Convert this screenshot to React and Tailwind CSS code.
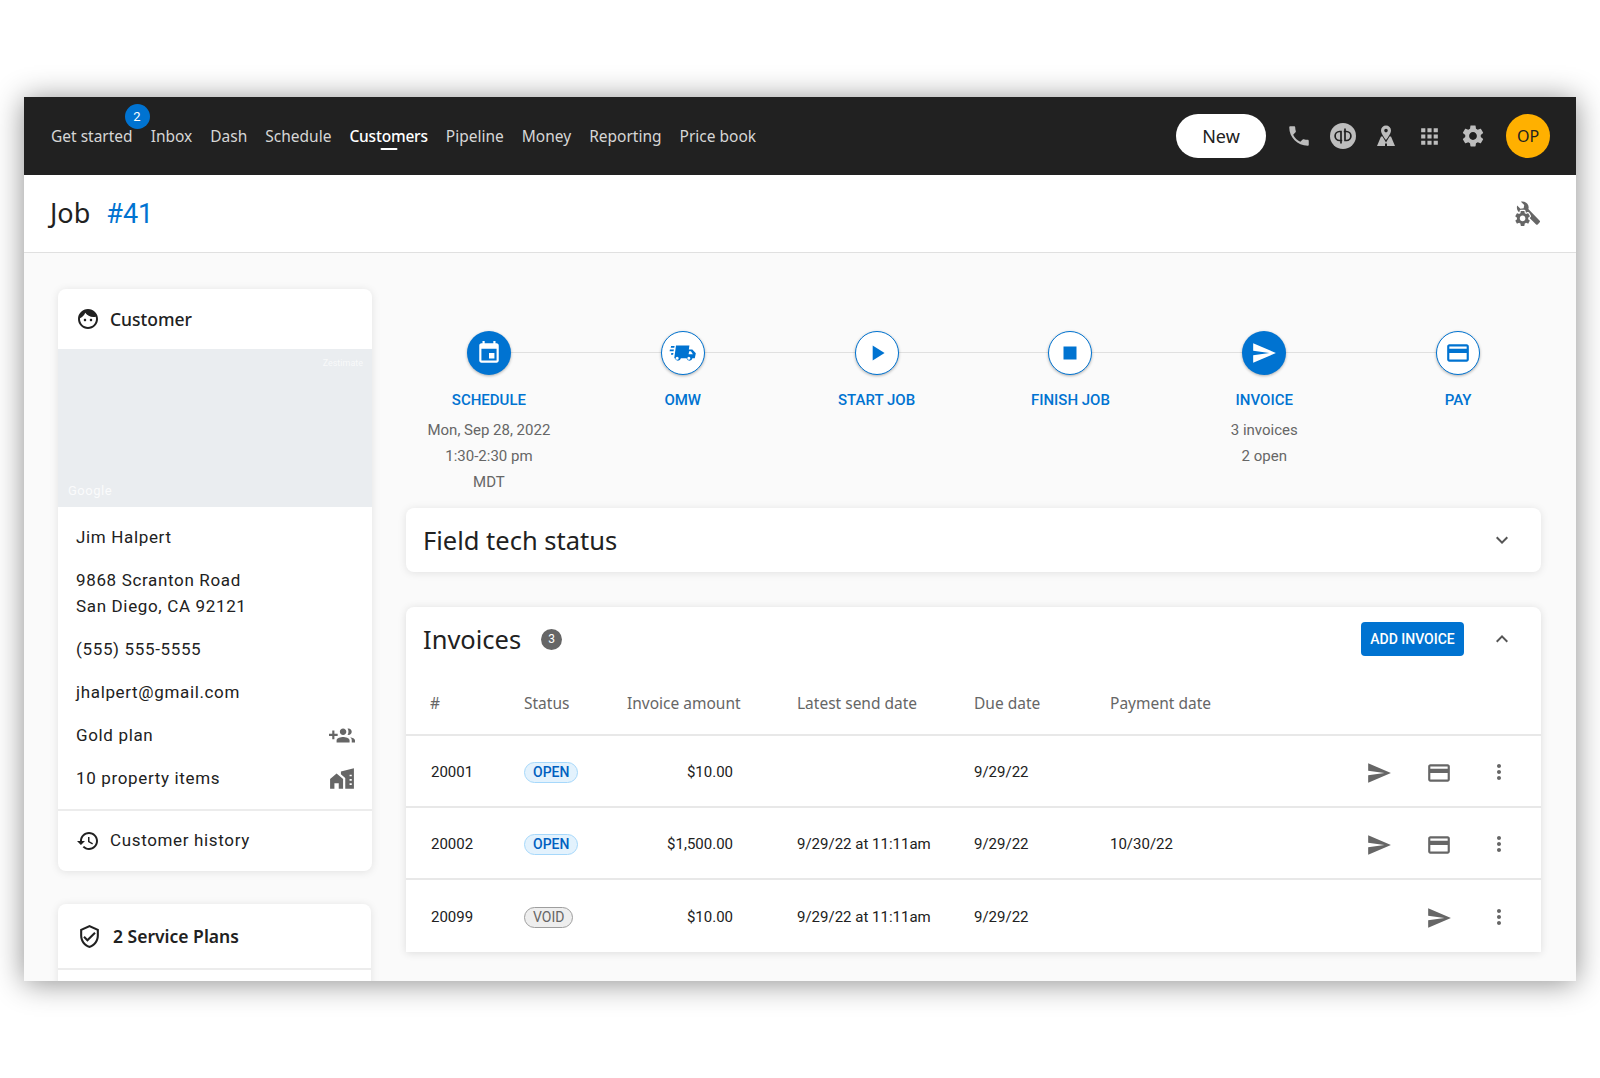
import React from 'react'

const noto = "font-['Noto_Sans',sans-serif]"

const paths = {
  phone: 'M6.62 10.79c1.44 2.83 3.76 5.14 6.59 6.59l2.2-2.2c.27-.27.67-.36 1.02-.24 1.12.37 2.33.57 3.57.57.55 0 1 .45 1 1V20c0 .55-.45 1-1 1-9.39 0-17-7.61-17-17 0-.55.45-1 1-1h3.5c.55 0 1 .45 1 1 0 1.25.2 2.45.57 3.57.11.35.03.74-.25 1.02l-2.2 2.2z',
  apps: 'M4 8h4V4H4v4zm6 12h4v-4h-4v4zm-6 0h4v-4H4v4zm0-6h4v-4H4v4zm6 0h4v-4h-4v4zm6-10v4h4V4h-4zm-6 4h4V4h-4v4zm6 6h4v-4h-4v4zm0 6h4v-4h-4v4z',
  gear: 'M19.14 12.94c.04-.3.06-.61.06-.94 0-.32-.02-.64-.07-.94l2.03-1.58c.18-.14.23-.41.12-.61l-1.92-3.32c-.12-.22-.37-.29-.59-.22l-2.39.96c-.5-.38-1.03-.7-1.62-.94l-.36-2.54c-.04-.24-.24-.41-.48-.41h-3.84c-.24 0-.43.17-.47.41l-.36 2.54c-.59.24-1.13.57-1.62.94l-2.39-.96c-.22-.08-.47 0-.59.22L2.74 8.87c-.12.21-.08.47.12.61l2.03 1.58c-.05.3-.09.63-.09.94s.02.64.07.94l-2.03 1.58c-.18.14-.23.41-.12.61l1.92 3.32c.12.22.37.29.59.22l2.39-.96c.5.38 1.03.7 1.62.94l.36 2.54c.05.24.24.41.48.41h3.84c.24 0 .44-.17.47-.41l.36-2.54c.59-.24 1.13-.56 1.62-.94l2.39.96c.22.08.47 0 .59-.22l1.92-3.32c.12-.22.07-.47-.12-.61l-2.01-1.58zM12 15.6c-1.98 0-3.6-1.62-3.6-3.6s1.62-3.6 3.6-3.6 3.6 1.62 3.6 3.6-1.62 3.6-3.6 3.6z',
  send: 'M2.01 21L23 12 2.01 3 2 10l15 2-15 2z',
  card: 'M20 4H4c-1.11 0-1.99.89-1.99 2L2 18c0 1.11.89 2 2 2h16c1.11 0 2-.89 2-2V6c0-1.11-.89-2-2-2zm0 14H4v-6h16v6zm0-10H4V6h16v2z',
  more: 'M12 8c1.1 0 2-.9 2-2s-.9-2-2-2-2 .9-2 2 .9 2 2 2zm0 2c-1.1 0-2 .9-2 2s.9 2 2 2 2-.9 2-2-.9-2-2-2zm0 6c-1.1 0-2 .9-2 2s.9 2 2 2 2-.9 2-2-.9-2-2-2z',
  down: 'M16.59 8.59L12 13.17 7.41 8.59 6 10l6 6 6-6z',
  up: 'M12 8l-6 6 1.41 1.41L12 10.83l4.59 4.58L18 14z',
  event: 'M17 12h-5v5h5v-5zM16 1v2H8V1H6v2H5c-1.11 0-1.99.9-1.99 2L3 19c0 1.1.89 2 2 2h14c1.1 0 2-.9 2-2V5c0-1.1-.9-2-2-2h-1V1h-2zm3 18H5V8h14v11z',
  play: 'M8 5v14l11-7z',
  stop: 'M6 6h12v12H6z',
  face: 'M9 11.75c-.69 0-1.25.56-1.25 1.25s.56 1.25 1.25 1.25 1.25-.56 1.25-1.25-.56-1.25-1.25-1.25zm6 0c-.69 0-1.25.56-1.25 1.25s.56 1.25 1.25 1.25 1.25-.56 1.25-1.25-.56-1.25-1.25-1.25zM12 2C6.48 2 2 6.48 2 12s4.48 10 10 10 10-4.48 10-10S17.52 2 12 2zm0 18c-4.41 0-8-3.59-8-8 0-.29.02-.58.05-.86 2.36-1.05 4.23-2.98 5.21-5.37C11.07 8.33 14.05 10 17.42 10c.78 0 1.53-.09 2.25-.26.21.71.33 1.47.33 2.26 0 4.41-3.59 8-8 8z',
  history: 'M13 3c-4.97 0-9 4.03-9 9H1l3.89 3.89.07.14L9 12H6c0-3.87 3.13-7 7-7s7 3.13 7 7-3.13 7-7 7c-1.93 0-3.68-.79-4.94-2.06l-1.42 1.42C8.27 19.99 10.51 21 13 21c4.97 0 9-4.03 9-9s-4.03-9-9-9zm-1 5v5l4.28 2.54.72-1.21-3.5-2.08V8H12z',
  groupAdd: 'M8 10H5V7H3v3H0v2h3v3h2v-3h3v-2zm10 1c1.66 0 2.99-1.34 2.99-3S19.66 5 18 5c-.32 0-.63.05-.91.14.57.81.9 1.79.9 2.86s-.34 2.04-.9 2.86c.28.09.59.14.91.14zm-5 0c1.66 0 2.99-1.34 2.99-3S14.66 5 13 5s-3 1.34-3 3 1.34 3 3 3zm6.62 2.16c.83.73 1.38 1.66 1.38 2.84v2h3v-2c0-1.54-2.37-2.49-4.38-2.84zM13 13c-2 0-6 1-6 3v2h12v-2c0-2-4-3-6-3z',
  shield: 'M12 1L3 5v6c0 5.55 3.84 10.74 9 12 5.16-1.26 9-6.45 9-12V5l-9-4zm7 10c0 4.52-2.98 8.69-7 9.93-4.02-1.24-7-5.41-7-9.93V6.3l7-3.11 7 3.11V11zm-11.59.59L6 13l4 4 8-8-1.41-1.42L10 14.17z',
}

function Icon({ name, className }) {
  return (
    <svg viewBox="0 0 24 24" fill="currentColor" className={className}>
      <path d={paths[name]} />
    </svg>
  )
}

function QuickbooksIcon() {
  return (
    <svg viewBox="0 0 26 26" className="w-[26px] h-[26px]">
      <circle cx="13" cy="13" r="13" fill="#bdbdbd" />
      <g fill="none" stroke="#212121" strokeWidth="1.7">
        <path d="M12.2 17.5H9.6a4.5 4.5 0 0 1 0-9h1.4v12" />
        <path d="M13.8 8.5h2.6a4.5 4.5 0 0 1 0 9H15V5.5" />
      </g>
    </svg>
  )
}

function MapPinIcon() {
  return (
    <svg viewBox="0 0 24 24" fill="#bdbdbd" className="w-[24px] h-[24px] ml-[-1px]">
      <path fillRule="evenodd" d="M12 1.500a5 5 0 0 0-5 5c0 3.400 5 9.500 5 9.500s5-6.100 5-9.500a5 5 0 0 0-5-5zm0 3.300a1.800 1.800 0 1 1 0 3.600 1.800 1.800 0 0 1 0-3.600z" />
      <path d="M7 12.500 3 22h8v-2.500h2V22h8l-4-9.500h-1.500L12 18.500 8.500 12.500z" />
    </svg>
  )
}

function WrenchGearIcon() {
  return (
    <svg viewBox="0 0 24 24" className="w-[26px] h-[26px] text-[#666]" fill="currentColor">
      <path d="M5.500 1.500 8.500 4.500 8 7.500 5 8 2 5C1.300 7.500 2 10 4 11.300c1.500 1 3.300 1.100 4.800.6l10.700 10.600c.4.400 1 .4 1.400 0l1.900-1.900c.4-.4.400-1 0-1.400L12.300 8.300c.6-1.600.3-3.500-.9-4.900C9.900 1.700 7.500 1 5.500 1.500z" />
      <g transform="translate(-1.640 8.360) scale(.72)">
        <path d={paths.gear} stroke="#fff" strokeWidth="3" paintOrder="stroke" />
      </g>
    </svg>
  )
}

function TruckIcon() {
  return (
    <svg viewBox="0 0 24 24" fill="currentColor" className="w-[28px] h-[28px]">
      <path d="M6 5.500h11.500L17 9h3l3 3.200-.9 4.300h-2a2.600 2.600 0 0 1-5.100 0h-4.800a2.600 2.600 0 0 1-5.100 0H4.500zM17.300 10.500l-.5 2.500h3.700l-1.700-2.500zM7 15.200a1.300 1.300 0 1 0 0 2.600 1.300 1.300 0 0 0 0-2.600zm10 0a1.300 1.300 0 1 0 0 2.600 1.300 1.300 0 0 0 0-2.600z" />
      <path d="M1.800 6h3l-.3 1.500H1.500zM.8 9h3.400l-.3 1.500H.5zM2 12h1.800l-.3 1.500H1.700z" />
    </svg>
  )
}

function HouseRulerIcon() {
  return (
    <svg viewBox="0 0 24 24" fill="#666" className="w-[26px] h-[26px]">
      <path d="M1 21v-9l6-5 6 5v9H9v-5H5v5z" />
      <path d="M11 5l12-3v19h-8v-10l-4-3.500zm10 3h-2v1.500h2zm0 4h-2v1.500h2zm0 4h-2v1.500h2z" fillRule="evenodd" />
    </svg>
  )
}

const navItems = ['Get started', 'Inbox', 'Dash', 'Schedule', 'Customers', 'Pipeline', 'Money', 'Reporting', 'Price book']

function TopNav() {
  return (
    <div className={`h-[78px] bg-[#212121] flex items-center pl-[27px] pr-[26px] ${noto}`}>
      <nav className="flex items-center gap-[18px] text-[15.5px] text-[#d6d6d6] mt-[2px]">
        {navItems.map((item) => (
          <span key={item} className={item === 'Customers' ? 'relative text-white font-medium tracking-[-0.2px]' : 'relative'}>
            {item}
            {item === 'Get started' && (
              <span className="absolute left-[73.5px] top-[-21px] w-[25px] h-[25px] rounded-full bg-[#0073d1] text-white text-[13px] font-['Roboto',sans-serif] flex items-center justify-center">2</span>
            )}
            {item === 'Customers' && (
              <span className="absolute left-1/2 -translate-x-1/2 top-[23px] w-[17px] h-[2px] rounded-full bg-white" />
            )}
          </span>
        ))}
      </nav>
      <div className="ml-auto flex items-center">
        <button className="w-[90px] h-[44px] rounded-full bg-white text-[#212121] text-[18px] mr-[21px]">New</button>
        <div className="flex items-center gap-[19px] text-[#bdbdbd]">
          <Icon name="phone" className="w-[26px] h-[26px] mx-[-1px]" />
          <QuickbooksIcon />
          <MapPinIcon />
          <Icon name="apps" className="w-[25px] h-[25px]" />
          <Icon name="gear" className="w-[26px] h-[26px] mx-[-1px]" />
        </div>
        <div className="ml-[21px] w-[44px] h-[44px] rounded-full bg-[#ffb000] text-[#212121] text-[16px] flex items-center justify-center">OP</div>
      </div>
    </div>
  )
}

function Detail({ children, icon }) {
  return (
    <div className="flex items-center justify-between h-[26px]">
      <span>{children}</span>
      {icon}
    </div>
  )
}

function CustomerCard() {
  return (
    <div className="w-[314px] bg-white rounded-[8px] shadow-[0_1px_8px_rgba(0,0,0,0.1)] overflow-hidden">
      <div className={`h-[60px] flex items-center pl-[18px] ${noto} text-[17.500px] font-medium text-[#212121]`}>
        <Icon name="face" className="w-[24px] h-[24px] mr-[10px]" />
        Customer
      </div>
      <div className="h-[158px] bg-[#eaedf0] relative font-['Roboto',sans-serif] text-white">
        <span className="absolute right-[9px] top-[8px] text-[9px] opacity-70">Zestimate</span>
        <span className="absolute left-[10px] bottom-[7px] text-[13px] tracking-[0.5px] opacity-80">Google</span>
      </div>
      <div className="font-['Roboto',sans-serif] text-[17px] tracking-[0.65px] text-[#212121] pl-[18px] pr-[17px] pt-[18px] pb-[17px] flex flex-col">
        <Detail>Jim Halpert</Detail>
        <div className="leading-[26px] mt-[16px]">
          9868 Scranton Road
          <br />
          San Diego, CA 92121
        </div>
        <div className="mt-[18px] flex flex-col gap-[17px]">
          <Detail>(555) 555-5555</Detail>
          <Detail>jhalpert@gmail.com</Detail>
          <Detail icon={<Icon name="groupAdd" className="w-[26px] h-[26px] text-[#666]" />}>Gold plan</Detail>
          <Detail icon={<HouseRulerIcon />}>10 property items</Detail>
        </div>
      </div>
      <div className="border-t-2 border-[#ececec] h-[62px] flex items-center pl-[18px] font-['Roboto',sans-serif] text-[17px] tracking-[0.65px] text-[#212121]">
        <Icon name="history" className="w-[24px] h-[24px] mr-[10px]" />
        Customer history
      </div>
    </div>
  )
}

function ServicePlansCard() {
  return (
    <div className="w-[313px] h-[120px] bg-white rounded-[8px] shadow-[0_1px_8px_rgba(0,0,0,0.1)] mt-[33px]">
      <div className={`h-[66px] flex items-center pl-[19px] border-b-2 border-[#ececec] ${noto} text-[17.500px] font-semibold text-[#212121]`}>
        <Icon name="shield" className="w-[25px] h-[25px] mr-[11px]" />
        2 Service Plans
      </div>
    </div>
  )
}

const steps = [
  { label: 'SCHEDULE', icon: 'event', filled: true, lines: ['Mon, Sep 28, 2022', '1:30-2:30 pm', 'MDT'] },
  { label: 'OMW', truck: true, lines: [] },
  { label: 'START JOB', icon: 'play', lines: [] },
  { label: 'FINISH JOB', icon: 'stop', lines: [] },
  { label: 'INVOICE', icon: 'send', filled: true, lines: ['3 invoices', '2 open'] },
  { label: 'PAY', icon: 'card', lines: [] },
]

function Stepper() {
  return (
    <div className="relative mx-[-14px] grid grid-cols-6 font-['Roboto',sans-serif]">
      <div className="absolute left-[97px] right-[97px] top-[21px] h-[1px] bg-[#e0e0e0]" />
      {steps.map((s) => (
        <div key={s.label} className="relative flex flex-col items-center">
          <div
            className={
              s.filled
                ? 'w-[44px] h-[44px] rounded-full bg-[#0073d1] text-white flex items-center justify-center shadow-[0_1px_3px_rgba(0,0,0,0.3)]'
                : 'w-[44px] h-[44px] rounded-full bg-white border border-[#0073d1] text-[#0073d1] flex items-center justify-center shadow-[0_1px_3px_rgba(0,0,0,0.3)]'
            }
          >
            {s.truck ? <TruckIcon /> : <Icon name={s.icon} className="w-[26px] h-[26px]" />}
          </div>
          <div className="mt-[15px] h-[20px] leading-[20px] text-[15px] font-medium text-[#0073d1]">{s.label}</div>
          <div className="mt-[7px] text-[15px] leading-[26px] text-[#666] text-center">
            {s.lines.map((l) => (
              <div key={l}>{l}</div>
            ))}
          </div>
        </div>
      ))}
    </div>
  )
}

const gridCols = 'grid grid-cols-[94px_103px_170px_177px_136px_120px_1fr] items-center pl-[24px]'

const invoices = [
  { id: '20001', status: 'OPEN', amount: '$10.00', sent: '', due: '9/29/22', paid: '', card: true },
  { id: '20002', status: 'OPEN', amount: '$1,500.00', sent: '9/29/22 at 11:11am', due: '9/29/22', paid: '10/30/22', card: true },
  { id: '20099', status: 'VOID', amount: '$10.00', sent: '9/29/22 at 11:11am', due: '9/29/22', paid: '', card: false },
]

function StatusBadge({ status }) {
  const open = status === 'OPEN'
  return (
    <span
      className={
        open
          ? 'inline-flex items-center h-[21px] px-[8px] rounded-full border border-[#a6d8fb] bg-[#e3f2fd] text-[#0060c0] text-[14px] font-medium'
          : 'inline-flex items-center h-[21px] px-[8px] rounded-full border border-[#9e9e9e] bg-[#eeeeee] text-[#666] text-[14px]'
      }
    >
      {status}
    </span>
  )
}

function InvoicesCard() {
  return (
    <div className="mt-[35px] h-[345px] bg-white rounded-t-[8px] shadow-[0_1px_8px_rgba(0,0,0,0.12)]">
      <div className="h-[64px] flex items-center pl-[17px] pr-[27px]">
        <span className={`${noto} text-[25.500px] text-[#212121]`}>Invoices</span>
        <span className="ml-[20px] w-[21px] h-[21px] rounded-full bg-[#666] text-white text-[12px] font-['Roboto',sans-serif] flex items-center justify-center">3</span>
        <button className="ml-auto w-[103px] h-[34px] rounded-[4px] bg-[#0073d1] text-white text-[14px] font-medium font-['Roboto',sans-serif]">ADD INVOICE</button>
        <Icon name="up" className="ml-[26px] w-[24px] h-[24px] text-[#555]" />
      </div>
      <div className={`${gridCols} h-[65px] pt-[3px] border-b-2 border-[#e8e8e8] ${noto} text-[15.500px] text-[#666]`}>
        <span>#</span>
        <span>Status</span>
        <span>Invoice amount</span>
        <span>Latest send date</span>
        <span>Due date</span>
        <span className="whitespace-nowrap">Payment date</span>
      </div>
      {invoices.map((inv, i) => (
        <div key={inv.id} className={`${gridCols} h-[72px] pt-[3px] font-['Roboto',sans-serif] text-[15px] text-[#212121] ${i < 2 ? 'border-b-2 border-[#e8e8e8]' : ''}`}>
          <span className="pl-[1px]">{inv.id}</span>
          <span><StatusBadge status={inv.status} /></span>
          <span className="w-[106px] text-right">{inv.amount}</span>
          <span>{inv.sent}</span>
          <span>{inv.due}</span>
          <span>{inv.paid}</span>
          <div className="flex justify-end pr-[12px] text-[#666]">
            <span className="w-[60px] flex justify-center"><Icon name="send" className="w-[26px] h-[26px]" /></span>
            {inv.card && <span className="w-[60px] flex justify-center"><Icon name="card" className="w-[26px] h-[26px]" /></span>}
            <span className="w-[60px] flex justify-center"><Icon name="more" className="w-[24px] h-[24px]" /></span>
          </div>
        </div>
      ))}
    </div>
  )
}

export default function App() {
  return (
    <div className="w-[1600px] h-[1078px] bg-white pt-[97px] pl-[24px] overflow-hidden">
      <div className="w-[1552px] h-[884px] bg-[#fafafa] overflow-hidden shadow-[0_2px_28px_rgba(0,0,0,0.45)]">
        <TopNav />
        <div className="h-[78px] bg-white border-b border-[#e0e0e0] flex items-center pl-[26px] pr-[35px]">
          <span className={`${noto} text-[27px] text-[#212121]`}>Job</span>
          <span className="ml-[16px] text-[27px] text-[#0073d1] font-['Roboto',sans-serif] mt-[2px]">#41</span>
          <span className="ml-auto mt-[-2px]"><WrenchGearIcon /></span>
        </div>
        <div className="flex pl-[34px] gap-[34px]">
          <div className="pt-[36px] shrink-0">
            <CustomerCard />
            <ServicePlansCard />
          </div>
          <div className="w-[1135px] pt-[78px] shrink-0">
            <Stepper />
            <div className={`mt-[13px] h-[64px] bg-white rounded-[8px] shadow-[0_1px_8px_rgba(0,0,0,0.1)] flex items-center justify-between pl-[17px] pr-[27px] ${noto} text-[25.500px] text-[#212121]`}>
              Field tech status
              <Icon name="down" className="w-[24px] h-[24px] text-[#555]" />
            </div>
            <InvoicesCard />
          </div>
        </div>
      </div>
    </div>
  )
}
